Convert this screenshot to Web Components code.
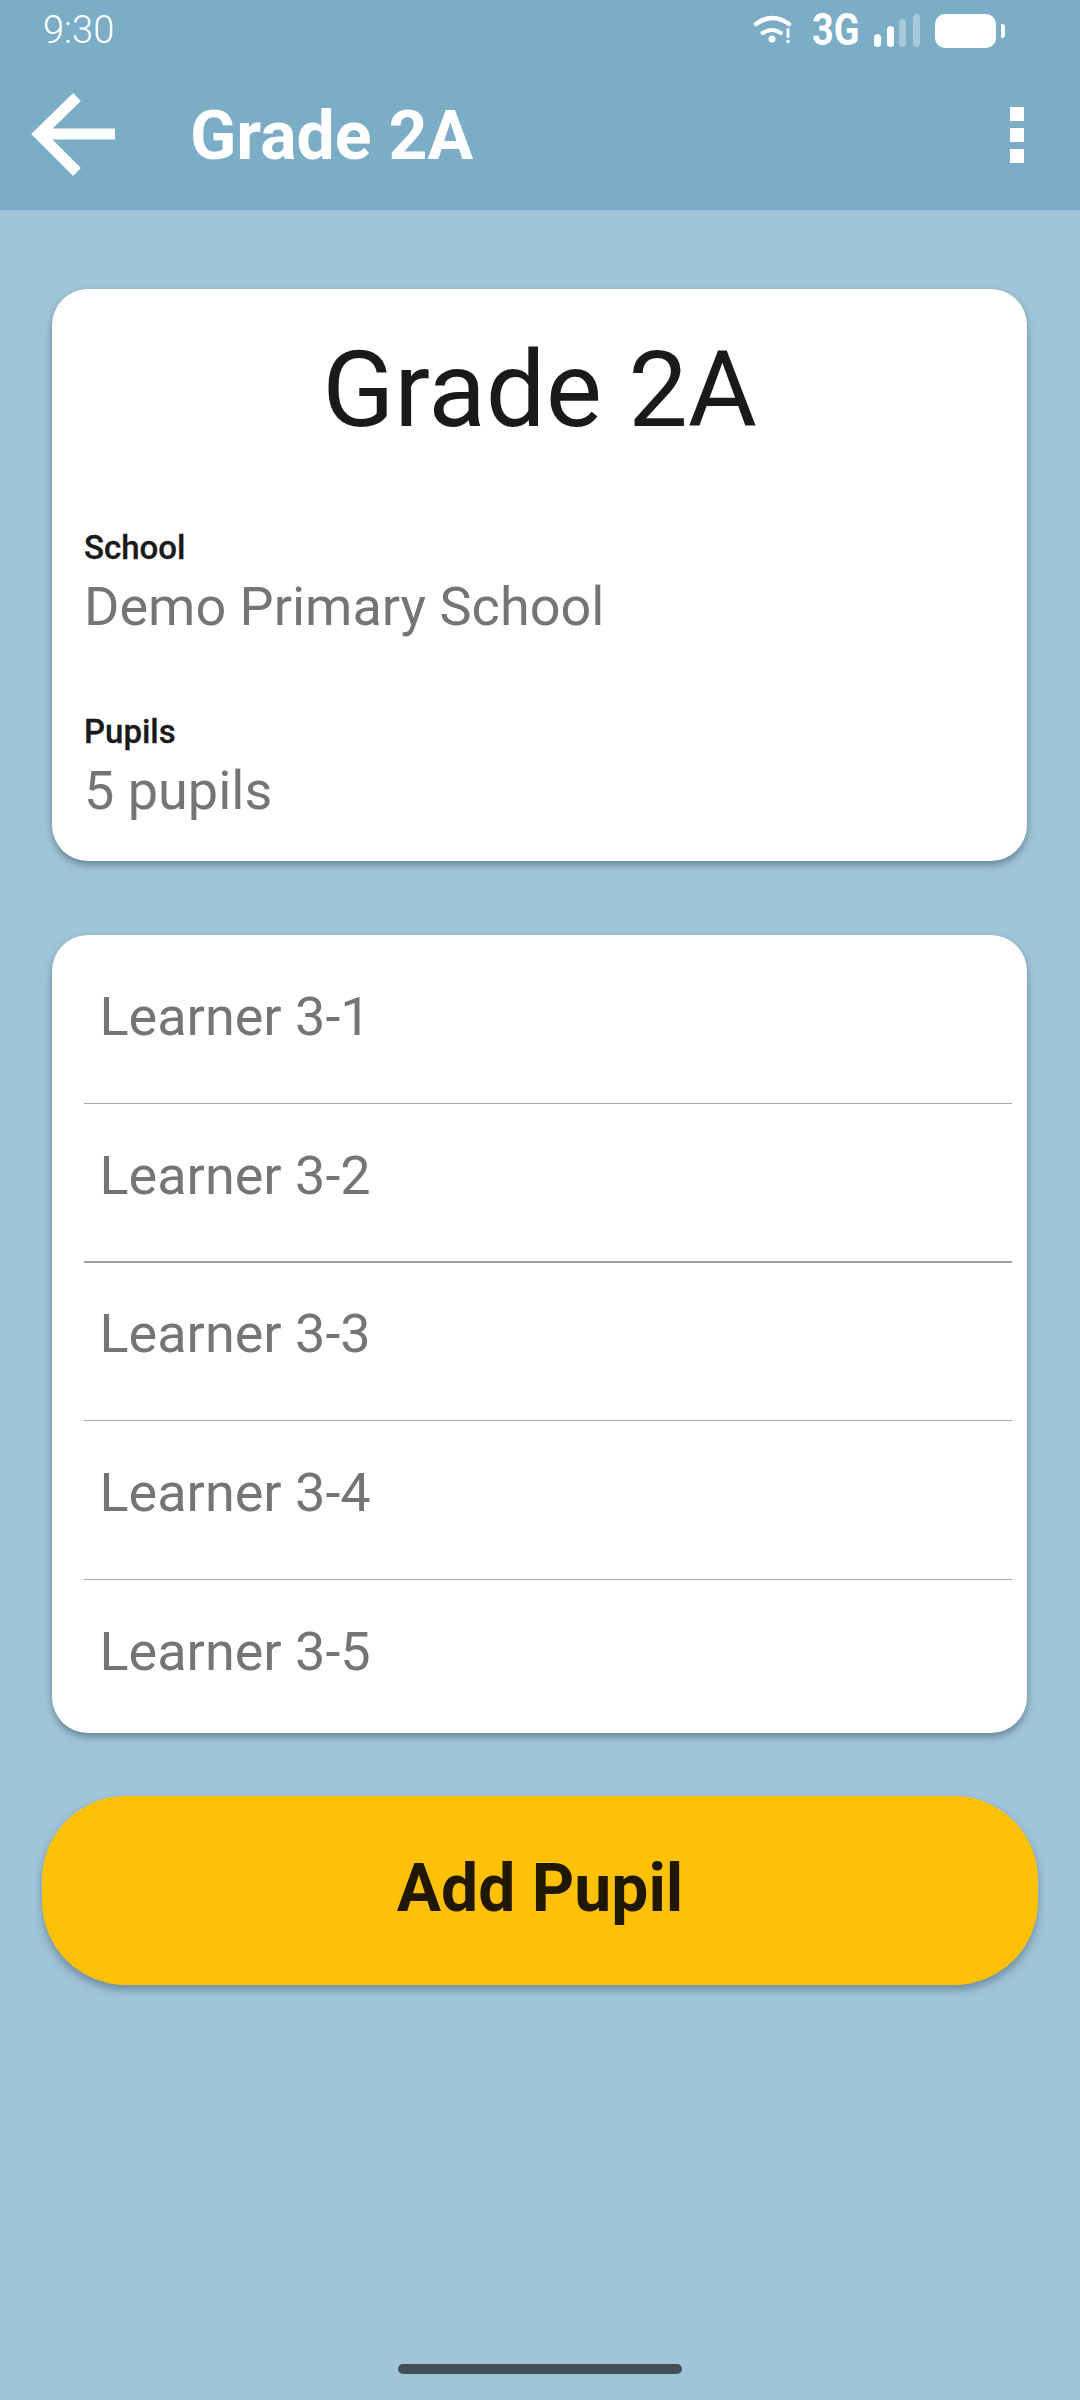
<!DOCTYPE html>
<html lang="en">
<head>
<meta charset="utf-8">
<title>Grade 2A</title>
<style>
html,body{margin:0;padding:0;background:#A0C4D8;font-family:Roboto,"Liberation Sans",sans-serif;}
</style>
</head>
<body>
<x-screen>
  <x-status-bar time="9:30"></x-status-bar>
  <x-app-bar>Grade 2A</x-app-bar>
  <x-info-card heading="Grade 2A">
    <x-field label="School">Demo Primary School</x-field>
    <x-field label="Pupils">5 pupils</x-field>
  </x-info-card>
  <x-list-card>
    <x-list-row>Learner 3-1</x-list-row>
    <x-list-row thick>Learner 3-2</x-list-row>
    <x-list-row>Learner 3-3</x-list-row>
    <x-list-row>Learner 3-4</x-list-row>
    <x-list-row last>Learner 3-5</x-list-row>
  </x-list-card>
  <x-pill-button>Add Pupil</x-pill-button>
  <x-home-indicator></x-home-indicator>
</x-screen>
<script>
function def(name, html, init){
  customElements.define(name, class extends HTMLElement{
    constructor(){
      super();
      const r=this.attachShadow({mode:'open'});
      r.innerHTML=html;
    }
    connectedCallback(){ if(init) init(this, this.shadowRoot); }
  });
}
def('x-screen',`<style>
:host{display:flex;flex-direction:column;width:1080px;height:2400px;background:#A0C4D8;overflow:hidden;}
</style><slot></slot>`);

def('x-status-bar',`<style>
:host{display:flex;align-items:flex-start;height:60px;background:#7BADC6;color:#fff;box-sizing:border-box;padding:0 75px 0 43px;justify-content:space-between;}
.t{font:300 38px/60px Roboto,sans-serif;color:#fff;height:60px;}
.r{display:flex;align-items:flex-start;height:60px;}
svg{display:block;flex:none;}
.g{font:700 45px/40px Roboto,sans-serif;display:block;width:47px;height:40px;margin:10px 15px 0 20px;transform:scaleX(.84);transform-origin:0 0;white-space:nowrap;}
</style>
<span class="t"></span>
<div class="r">
  <svg width="39" height="32" viewBox="0 0 39 32" style="margin-top:14px">
    <path d="M3 10Q19 -2 36 10" fill="none" stroke="#fff" stroke-width="4.500" stroke-linecap="round"/>
    <path d="M9.500 19Q19 13 28 19" fill="none" stroke="#fff" stroke-width="4" stroke-linecap="round"/>
    <circle cx="19" cy="25" r="3.500" fill="#fff"/>
    <rect x="33.500" y="14" width="3" height="10" rx="1.500" fill="#fff"/>
    <circle cx="35" cy="27.500" r="1.800" fill="#fff"/>
  </svg>
  <span class="g">3G</span>
  <svg width="46" height="34" viewBox="0 0 46 34" style="margin-top:14px">
    <rect x="0" y="20" width="7" height="13" rx="3.500" fill="#fff"/>
    <rect x="13" y="12" width="7" height="21" rx="3.500" fill="#fff"/>
    <rect x="25" y="5" width="7" height="28" rx="3.500" fill="#fff" fill-opacity=".35"/>
    <rect x="39" y="0" width="7" height="33" rx="3.500" fill="#fff" fill-opacity=".35"/>
  </svg>
  <svg width="70" height="36" viewBox="0 0 70 36" style="margin:13px 0 0 15px">
    <rect x="0" y="1" width="61" height="34" rx="10" fill="#fff"/>
    <path d="M66 11h1a3 3 0 0 1 3 3v8a3 3 0 0 1-3 3h-1z" fill="#fff"/>
  </svg>
</div>`,(h,r)=>{r.querySelector('.t').textContent=h.getAttribute('time')||'';});

def('x-app-bar',`<style>
:host{display:flex;align-items:center;height:150px;background:#7BADC6;color:#fff;box-sizing:border-box;padding:0 56px 0 30px;}
svg{display:block;flex:none;}
.title{font:700 68px/1 Roboto,sans-serif;margin-left:74px;flex:1;white-space:nowrap;padding-top:2px;}
.dots{display:flex;flex-direction:column;gap:7px;}
.dots i{display:block;width:14px;height:14px;background:#fff;}
</style>
<svg width="86" height="88" viewBox="0 0 86 88">
  <path d="M85 43H9M47 6L9 43l38 38" fill="none" stroke="#fff" stroke-width="11"/>
</svg>
<span class="title"><slot></slot></span>
<div class="dots"><i></i><i></i><i></i></div>`);

def('x-info-card',`<style>
:host{display:block;margin:79px 53px 0 52px;background:#fff;border-radius:36px;box-shadow:0 4px 7px rgba(30,60,80,.45);padding:32px 32px 38px;}
h1{margin:0 0 69px;font:400 106px/138px Roboto,sans-serif;color:#1a1a1a;text-align:center;}
::slotted(x-field:not(:first-of-type)){margin-top:73px;}
</style>
<h1></h1>
<slot></slot>`,(h,r)=>{r.querySelector('h1').textContent=h.getAttribute('heading')||'';});

def('x-field',`<style>
:host{display:block;}
.l{font:500 33px/40px Roboto,sans-serif;color:#1a1a1a;-webkit-text-stroke:.3px #1a1a1a;}
.v{font:400 54px/64px Roboto,sans-serif;color:#757575;margin-top:7px;}
</style>
<div class="l"></div>
<div class="v"><slot></slot></div>`,(h,r)=>{r.querySelector('.l').textContent=h.getAttribute('label')||'';});

def('x-list-card',`<style>
:host{display:block;margin:74px 53px 0 52px;background:#fff;border-radius:36px;box-shadow:0 4px 7px rgba(30,60,80,.45);padding:10.5px 15px 0 32px;}
</style><slot></slot>`);

def('x-list-row',`<style>
:host{display:block;height:158.5px;box-sizing:border-box;padding:39.5px 0 0 15.5px;border-bottom:1px solid #aaa;font:400 54px/64px Roboto,sans-serif;color:#757575;}
:host([thick]){border-bottom:2px solid #9e9e9e;}
:host([last]){height:153.5px;padding-top:40.5px;border-bottom:0;}
</style><slot></slot>`);

def('x-pill-button',`<style>
:host{display:flex;align-items:center;justify-content:center;box-sizing:border-box;height:189px;padding-bottom:3px;margin:63px 42px 0;background:#FFC107;border-radius:84px;box-shadow:0 5px 8px rgba(30,60,80,.4);font:700 66px/1 Roboto,sans-serif;color:#1f1700;}
</style><slot></slot>`);

def('x-home-indicator',`<style>
:host{display:block;margin:auto auto 26px;width:284px;height:10px;border-radius:5px;background:#424F57;}
</style>`);
</script>
</body>
</html>
